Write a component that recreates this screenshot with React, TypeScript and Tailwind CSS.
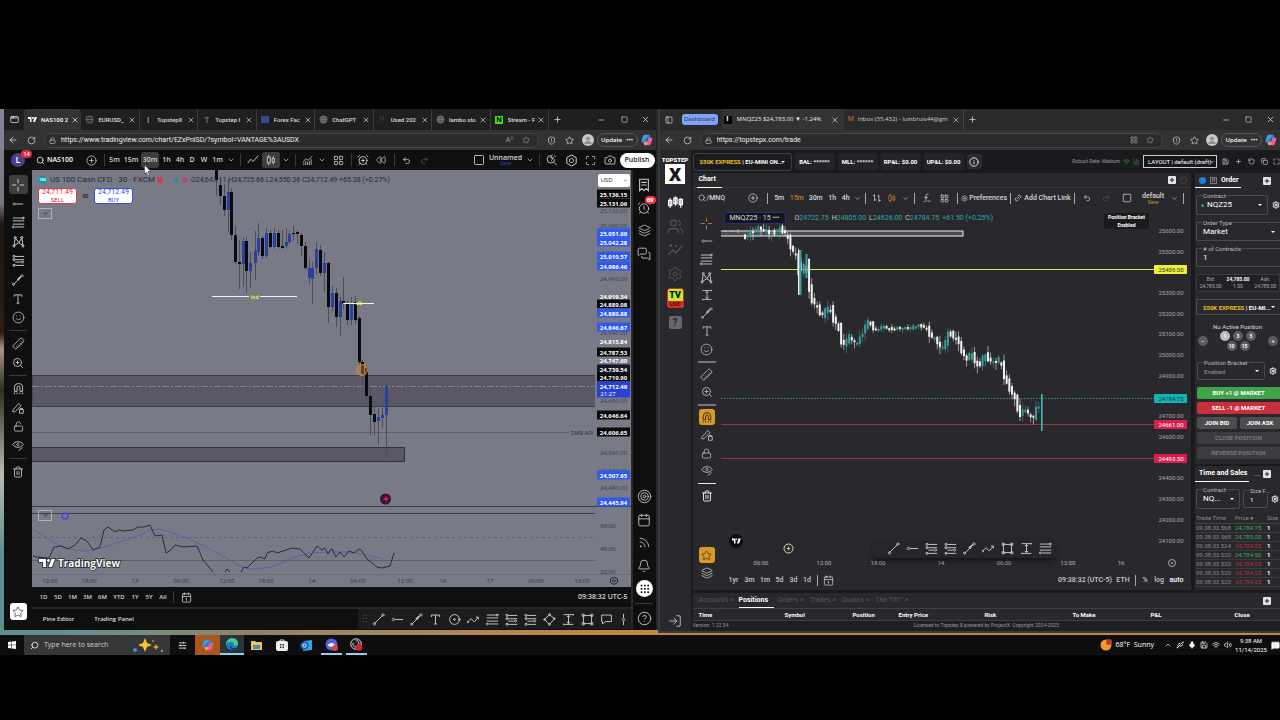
import React from "react";
import {
  ArrowLeft, RotateCw, Lock, LockOpen, Star, Plus, X, Minus, Square, Search, CirclePlus, ChevronDown, LayoutGrid,
  AlarmClockPlus, AlarmClock, Rewind, Undo2, Redo2, Maximize, Camera, Smile, Ruler, ZoomIn, Trash2,
  Layers, MessagesSquare, Target, Calendar, Rss, Bell, CircleHelp, Settings, Link2, Save, Copy, RotateCcw,
  Wifi, LogIn, Users, Mic, Volume2, ChevronUp, Info, BarChart3, Calendar1,
  PanelLeft, AppWindow, SlidersHorizontal, ChartNoAxesCombined, Usb, ShieldAlert, MessageSquareText,
} from "lucide-react";

type Kids = { children?: React.ReactNode };

const LEFT_FONT = "font-['Open_Sans','Noto_Sans',sans-serif]";
const NARROW = "font-['Liberation_Sans_Narrow','Roboto',sans-serif]";

function Glyph({ d, size = 12, fill = false }: { d: string; size?: number; fill?: boolean }) {
  return (
    <svg width={size} height={size} viewBox="0 0 16 16" fill={fill ? "currentColor" : "none"} stroke="currentColor" strokeWidth="1.2" aria-hidden="true">
      <path d={d} />
    </svg>
  );
}

const P = {
  cross: "M8 1v5M8 10v5M1 8h5M10 8h5",
  hline: "M5 8h10M3 6.5a1.5 1.5 0 1 0 .01 0",
  fib: "M1 2.5h14M1 6h14M1 10h14M3 13.5h12M1.5 12.5a1 1 0 1 0 .01 0M14 1.5a1 1 0 1 1-.01 0",
  pattern: "M2.500 13L4 3.500l4.500 6L12 3.500 13.500 13 8.500 9.500zM4 2a1.200 1.200 0 1 0 .01 0M12 2a1.200 1.200 0 1 0 .01 0M2.500 12.500a1.200 1.200 0 1 0 .01 0M13.500 12.500a1.200 1.200 0 1 0 .01 0",
  channel: "M4 3h11M4 7h11M4 10h7M4 14h11M2.5 1.8a1.2 1.2 0 1 0 .01 0M2.5 5.8a1.2 1.2 0 1 0 .01 0M13 8.8a1.2 1.2 0 1 0 .01 0M2.5 12.8a1.2 1.2 0 1 0 .01 0",
  trend: "M3 13L14 2M3 12a1.4 1.4 0 1 0 .01 0M13.5 1a1.4 1.4 0 1 0 .01 0",
  arrow: "M2 14l10-10M7 7l5-4-3 5zM8 6.500l3-2.500-2 3zM2 12.6a1.2 1.2 0 1 0 .01 0M13.5 1a1.4 1.4 0 1 0 .01 0",
  text: "M3 5V2.500h10V5M8 2.500v11M6 13.500h4",
  circle: "M8 2a6 6 0 1 0 .01 0M8 7a1 1 0 1 0 .01 0M14 7a1 1 0 1 0 .01 0",
  zig: "M1 11l4-4 4 4 5-6M11 5h3v3M1 10.500a.8 .8 0 1 0 .01 0",
  rotate: "M8 2l6 5-6 7-6-6zM8 1a1 1 0 1 0 .01 0M14 6a1 1 0 1 0 .01 0M2 7a1 1 0 1 0 .01 0M8 13a1 1 0 1 0 .01 0",
  range: "M2 2h12M2 14h12M8 3v10M6 5l2-2 2 2M6 11l2 2 2-2M14 1v2M2 13v2",
  rect: "M3 3h10v10H3zM1.500 1.500h2.500v2.500H1.500zM12 1.500h2.500v2.500H12zM1.500 12h2.500v2.500H1.500zM12 12h2.500v2.500H12z",
  flag: "M2 2.500h12v8H7l-4 3v-3H2z",
  candle: "M5 1v3M5 12v3M3 4h4v8H3zM11 3v3M11 11v2.500M9.500 6h3v5h-3z",
  line: "M1 12l4-5 3 3 7-8",
  bars: "M4 2v11M4 4H1.500M4 11h3M11 3v11M11 5H8.500M11 12h3",
  fx: "M12 2C9 1 8 2 8 5v6c0 2-1 3-4 3M5 7h6M10 13h5",
  lockpen: "M1 11l8-9 3 3-8 8H1zM10 10h5v5h-5zM11 10V8.500h3V10",
  eyepen: "M1 6c3-5 11-5 14 0-3 5-11 5-14 0M8 4.500a1.500 1.500 0 1 0 .01 0M9 14l5-4",
  candles: "M3 4v9M1.500 6h3v5h-3zM8 2v9M6.500 4h3v5h-3zM13 4v9M11.500 5h3v5h-3z",
  sparkline: "M1 13l5-5 3 3 6-7M4 2v3M2.500 3.500h3M9 3v2M8 4h2",
  magnet: "M3 11.500V7a5 5 0 0 1 10 0v4.500h-3.200V7a1.800 1.800 0 0 0-3.600 0v4.500zM3 13v2M6.200 13v2M9.800 13v2M13 13v2",
  hex: "M8 1.200h0l5.800 3.300v7L8 14.800l-5.800-3.300v-7zM8 5.500a2.500 2.500 0 1 0 .01 0",
  list: "M3 1.500h10v13L10.500 12 8 14.500 5.500 12 3 14.500zM5 5h6M5 8h6",
  quick: "M6.500 2a5 5 0 1 0 5 5M10.500 11l4 4M8.500 1l-2.500 4h4l-3 4M12 2v2",
};

function Btn({ label, className, children, on = false }: Kids & { label: string; className: string; on?: boolean }) {
  return (
    <button type="button" aria-label={label} className={`flex shrink-0 items-center justify-center rounded-[3px] ${on ? "bg-[#3d3d3d]" : ""} ${className}`}>
      {children}
    </button>
  );
}

function Bar({ className = "h-[12px] bg-[#3a3a3a]" }: { className?: string }) {
  return (
    <span className="flex w-[7px] shrink-0 items-center justify-center">
      <span className={`w-px ${className}`} />
    </span>
  );
}

function TvMark({ size = 9 }: { size?: number }) {
  return (
    <svg width={size} height={size} viewBox="0 0 18 12" fill="currentColor" aria-hidden="true">
      <path d="M0 1h7v10H4V5H0zM10 1a2 2 0 1 1-.01 4 2 2 0 0 1 0-4M13.500 1H18l-4 10h-4z" />
    </svg>
  );
}

function Copilot({ size = 10 }: { size?: number }) {
  return (
    <svg width={size} height={size} viewBox="0 0 16 16" aria-hidden="true">
      <path d="M5 1h5c2 0 2 2 2.500 4L8 6 6 11H2C0 11 1 8 2 5 2.800 2 3.500 1 5 1z" fill="#35a4e8" />
      <path d="M10 1c2 0 2 2 2.500 4h-4L7 10c-.6 2-1 3-2.500 3C3 13 3 11 2.500 10" fill="#3f72d8" />
      <path d="M11 15H6c-2 0-2-2-2.500-4L8 10l2-5h4c2 0 1 3 0 6-.8 3-1.500 4-3 4z" fill="#e85d9a" />
      <path d="M6 15c-2 0-2-2-2.500-4h4L9 12z" fill="#f2b13c" />
    </svg>
  );
}

/* ---------- browser chrome ---------- */

function TabIcon({ kind }: { kind: string }) {
  if (kind === "tv") return <TvMark size={9} />;
  if (kind === "n") return <span className="flex size-[8px] items-center justify-center bg-[#3be31c] text-[7px] leading-none font-bold text-black">N</span>;
  if (kind === "blue") return <span className="h-[7px] w-[8px] bg-[#2d4f8c]" />;
  if (kind === "I") return <span className="text-[8px] font-bold text-[#888]">I</span>;
  if (kind === "T") return <span className="text-[8px] font-bold text-[#666]">T</span>;
  if (kind === "H") return <span className="text-[7px] text-[#444]">H</span>;
  return (
    <svg width="9" height="9" viewBox="0 0 16 16" fill={kind === "dot" ? "#555" : "none"} stroke="#777" strokeWidth="1.300" aria-hidden="true">
      <circle cx="8" cy="8" r="6.500" />
      <path d="M2 8h12M8 1.500c-4 4-4 9 0 13M8 1.500c4 4 4 9 0 13" />
    </svg>
  );
}

const TABS: [string, string][] = [
  ["tv", "NAS100 2"], ["globe", "EURUSD_"], ["I", "TopstepX"], ["T", "Topstep I"], ["blue", "Forex Fac"],
  ["dot", "ChatGPT"], ["H", "Used 202"], ["dot", "lambo sto"], ["n", "Stream - F"],
];

function WindowButtons() {
  return (
    <div className="ml-auto flex h-full shrink-0 text-[#ddd]">
      <Btn label="Minimize" className="w-[23px]"><Minus size={8} /></Btn>
      <Btn label="Restore" className="w-[23px]"><Square size={7} /></Btn>
      <Btn label="Close" className="w-[20px]"><X size={9} /></Btn>
    </div>
  );
}

function AddressRow({ url, id, first }: { url: string; id: string; first: React.ReactNode }) {
  return (
    <div className="flex h-[20px] items-center bg-[#323232] text-[#cfcfcf]">
      <Btn label="Back" className="h-4 w-[18px]"><ArrowLeft size={10} /></Btn>
      <Btn label="Reload" className="h-4 w-[19px]"><RotateCw size={9} /></Btn>
      <div className="ml-[3px] flex h-[15px] min-w-0 flex-1 items-center rounded-full border border-[#454545] bg-[#2b2b2b] px-1">
        <Lock size={7} className="shrink-0" />
        <label htmlFor={id} className="sr-only">Address</label>
        <input id={id} defaultValue={url} className="ml-[5px] min-w-0 flex-1 bg-transparent font-['Roboto','Liberation_Sans',sans-serif] text-[7px] leading-[10px] text-[#f0f0f0] outline-none" />
        <Btn label="Page tool" className="w-4 text-[#999]">{first}</Btn>
        <Btn label="Favorite" className="w-4 text-[#999]"><Star size={8} /></Btn>
      </div>
      <Btn label="Extensions" className="ml-1 h-4 w-[18px]"><ShieldAlert size={9} /></Btn>
      <Btn label="Collections" className="h-4 w-[18px]"><Star size={9} /></Btn>
      <Btn label="Profile" className="h-4 w-[18px]">
        <svg width="12" height="12" viewBox="0 0 12 12" aria-hidden="true"><circle cx="6" cy="6" r="6" fill="#c9c9c9" /><circle cx="6" cy="4.500" r="2" fill="#8d8d8d" /><path d="M2.200 10c.6-4 7-4 7.600 0" fill="#8d8d8d" /></svg>
      </Btn>
      <button type="button" className="flex h-[14px] w-[41px] shrink-0 items-center justify-center gap-1 rounded-full border border-[#555] text-[6px] font-semibold text-white">
        Update <span aria-hidden="true">•••</span>
      </button>
      <Btn label="Copilot" className="h-4 w-[18px]"><Copilot size={12} /></Btn>
    </div>
  );
}

/* ---------- left chart ---------- */

type Candle = [number, number, number, number, number, 0 | 1];
// x, wick top, body top, body bottom, wick bottom, rising
const CANDLES: Candle[] = [
  [217, 170, 170, 180, 196, 0], [221, 178, 185, 196, 205, 0], [225, 184, 196, 210, 216, 0], [229, 180, 192, 210, 232, 1],
  [232, 188, 192, 235, 240, 0], [236, 226, 235, 262, 264, 0], [240, 240, 262, 264, 289, 0], [244, 238, 241, 264, 287, 1],
  [247, 237, 241, 271, 293, 0], [251, 252, 263, 271, 288, 1], [256, 231, 251, 263, 280, 1], [259, 223, 238, 252, 256, 1],
  [263, 236, 238, 256, 259, 0], [267, 228, 233, 256, 258, 1], [271, 230, 233, 247, 248, 0], [275, 228, 233, 247, 249, 1],
  [279, 230, 233, 247, 248, 0], [283, 230, 246, 248, 249, 0], [287, 228, 242, 246, 248, 1], [290, 231, 234, 242, 244, 1],
  [294, 226, 233, 234, 241, 0], [298, 230, 232, 234, 244, 0], [302, 233, 235, 246, 256, 0], [306, 242, 246, 268, 270, 0],
  [310, 259, 268, 278, 284, 1], [313, 262, 268, 279, 304, 1], [317, 242, 249, 268, 275, 1], [321, 245, 250, 273, 276, 0],
  [325, 252, 263, 273, 292, 1], [329, 262, 263, 307, 323, 0], [333, 286, 293, 307, 311, 1], [337, 288, 293, 317, 327, 0],
  [341, 297, 301, 317, 336, 1], [344, 277, 301, 304, 310, 0], [348, 300, 304, 320, 325, 0], [352, 297, 304, 320, 325, 1],
  [356, 296, 302, 320, 324, 0], [360, 316, 318, 362, 366, 0], [363, 360, 362, 374, 388, 0], [367, 365, 368, 396, 402, 0],
  [371, 388, 396, 415, 436, 0], [375, 402, 414, 422, 436, 0], [379, 408, 417, 421, 445, 1], [383, 397, 415, 418, 428, 1],
  [387, 380, 386, 415, 457, 1],
];

const RSI_A = "M34 556l4 1 12 1 5-11 7-1 7 3 7-4 6-7 6 3 6 9 7-3 4-17 4-3 7 5 4-2 4 1 10-1 5-3 6 0 6-2 5 11 7-1 4 18 5-3 4-5 8 2 14-1 6 14 10 12M226 572l2-3 3 3M242 572l3-5 3 1 10-10 4-1 4 2 2-6 6-2 4 2 15-5 8 1 9 9 8-12 5 4 3-2 3 6 3-5 1 0 4 8 4-5 4 5 5-6 5 2 5-4 3 2 5 8 10 8 5 1 8-2 4-13";
const RSI_B = "M34 529C50 540 65 550 83 551C100 551 115 543 133 538C146 534 152 529 158 529C180 532 210 548 243 567C255 572 275 568 293 558C310 552 325 552 340 552C362 552 370 556 384 559";

const AXIS_TIMES: [number, string][] = [
  [51, "12:00"], [90, "18:00"], [136, "13"], [182, "06:00"], [228, "12:00"], [267, "18:00"], [313, "14"],
  [359, "06:00"], [406, "12:00"], [444, "16"], [491, "17"], [537, "06:00"], [583, "12:00"],
];

function LeftPlot() {
  return (
    <svg className="block h-[417px] min-w-0 flex-1 bg-[#787a86]" aria-label="US 100 Cash price chart">
      <g transform="translate(-33 -170)">
        <rect x="33" y="375.500" width="3000" height="31" fill="#5a5865" stroke="#3c3b46" strokeWidth="1" />
        <rect x="30" y="447.500" width="375.500" height="14" fill="#5a5865" stroke="#32313a" strokeWidth="1" />
        <path d="M33 386.500H3000" stroke="#8b7f8f" strokeDasharray="7 2 2 2" />
        <path d="M33 432.500H570" stroke="#5f616c" />
        <path d="M33 506.500H3000M33 513.500H3000" stroke="#3a3c46" />
        <path d="M33 537.500H3000" stroke="#61636f" strokeDasharray="3 3" />
        <path d="M33 560.500H3000" stroke="#5b6060" />
        <path d="M33 574.500H3000" stroke="#696b78" />
        <g>
          {CANDLES.map(([x, a, b, c, d, up]) => (
            <g key={x}>
              <rect x={x} y={a} width="1" height={d - a} fill="#4b4d5b" />
              <rect x={x - 1} y={b} width="3" height={c - b} fill={up ? "#2c3f9e" : "#090912"} />
            </g>
          ))}
        </g>
        <path d="M213 296.500H298M344 303.500H375" stroke="#f3f3f3" strokeWidth="1.200" />
        <rect x="250" y="293" width="11" height="7" fill="#787a86" />
        <text x="255.500" y="298.500" textAnchor="middle" fontSize="5" fontWeight="700" fill="#f2e33c">Ind</text>
        <text x="360" y="305" textAnchor="middle" fontSize="5" fontWeight="700" fill="#f2e33c">ob</text>
        <circle cx="363" cy="370" r="5.500" fill="#c98a3c" fillOpacity="0.450" stroke="#d18a2e" />
        <circle cx="386.500" cy="499" r="5.500" fill="#3b0f3f" />
        <path d="M388 495l-4 5h3l-1 3 4-5h-3z" fill="#e0264f" />
        <path d={RSI_B} fill="none" stroke="#5d60a8" />
        <path d={RSI_A} fill="none" stroke="#2a2c36" />
        <text x="572" y="435" fontSize="5" fill="#23252f">DMSI AOI</text>
        <g fontSize="6" fill="#30323d" textAnchor="middle">
          {AXIS_TIMES.map(([x, t]) => (
            <text key={x} x={x} y="582.500">{t}</text>
          ))}
        </g>
        <g transform="translate(40 556)" fill="#ffffff" stroke="#23252f" strokeWidth="1.500" paintOrder="stroke">
          <path d="M0 3h7v8H4V6H0zM9.500 3a1.500 1.500 0 1 1-.01 3 1.500 1.500 0 0 1 0-3M12.500 3H16l-3 8H9.500z" />
          <text x="19" y="10.500" fontSize="10" fontWeight="700">TradingView</text>
        </g>
        <path d="M66 513a3 3 0 1 1-3 3l1-2" fill="none" stroke="#5a3fe0" strokeWidth="1.600" />
      </g>
    </svg>
  );
}

// y, value, style: k black, b blue, w white text, g grey text, n navy
const LEFT_PRICES: [number, string, string][] = [
  [210, "25,120.00", "g"], [225, "25,080.00", "g"], [261, "25,000.00", "g"], [278, "24,960.00", "g"], [332, "24,840.00", "g"],
  [400, "24,680.00", "g"], [452, "24,560.00", "g"], [470, "24,520.00", "g"], [487, "24,480.00", "g"],
  [194, "25,136.15", "k"], [203, "25,131.06", "k"], [233, "25,051.00", "b"], [242, "25,042.28", "b"], [256, "25,010.57", "b"],
  [266, "24,986.46", "b"], [296, "24,919.34", "w"], [304, "24,889.08", "k"], [313, "24,880.88", "b"], [327, "24,846.67", "b"],
  [341, "24,815.84", "w"], [352, "24,787.53", "k"], [360, "24,747.69", "w"], [369, "24,739.54", "n"], [377, "24,719.90", "k"],
  [415, "24,646.64", "k"], [432, "24,606.65", "k"], [475, "24,507.95", "b"], [502, "24,445.94", "b"],
];
const TAG: Record<string, string> = { k: "#0a0a0a", b: "#2f59f0", w: "none", g: "none", n: "#14162c" };

function LeftAxis() {
  return (
    <svg className="block h-[417px] w-[36px] shrink-0 bg-[#787a86]" aria-label="Price axis">
      <g transform="translate(-595 -170)" fontSize="6" textAnchor="middle">
        <path d="M595 506.500h40" stroke="#3a3c46" />
        <path d="M595 574.500h40" stroke="#696b78" />
        {LEFT_PRICES.map(([y, t, k]) => (
          <g key={t}>
            <rect x="597" y={y - 4.500} width="33" height="9" fill={TAG[k]} />
            <text x="613.500" y={y + 2.500} fill={k === "g" ? "#3a3c47" : "#ffffff"} fontWeight={k === "g" ? 400 : 700}>{t}</text>
          </g>
        ))}
        <rect x="597" y="381.500" width="33" height="16" fill="#2743d0" />
        <text x="613.500" y="388.500" fill="#fff" fontWeight="700">24,712.49</text>
        <text x="608" y="395.500" fill="#fff">21:27</text>
        <text x="608" y="527.500" fill="#30323d">60.00</text>
        <text x="608" y="550.500" fill="#30323d">40.00</text>
        <text x="608" y="573.500" fill="#30323d">20.00</text>
        <path d="M614 577l3.500 2v3.500l-3.500 2-3.500-2V579zM614 579.500a1.300 1.300 0 1 0 .01 0" fill="none" stroke="#23252f" />
      </g>
    </svg>
  );
}

const DRAW_TOOLS: [string, string][] = [
  ["Trend line", P.trend], ["Horizontal ray", P.hline], ["Arrow", P.arrow], ["Text", P.text], ["Circle", P.circle], ["Path", P.zig],
  ["Fib retracement", P.fib], ["Long position", P.channel], ["Short position", P.channel], ["Rotated rectangle", P.rotate],
  ["Price range", P.range], ["Rectangle", P.rect], ["Callout", P.flag],
];

function RailRule({ className }: { className: string }) {
  return <div className="flex h-[7px] shrink-0 items-center justify-center"><span className={`w-[18px] ${className}`} /></div>;
}

function LeftRail() {
  const c = "h-[19px] w-[19px]";
  return (
    <nav aria-label="Drawing tools" className="flex w-[28px] shrink-0 flex-col items-center bg-[#0f0f0f] pt-[5px] text-[#c8c8c8]">
      <Btn label="Crosshair" className={c} on><Glyph d={P.cross} size={14} /></Btn>
      <Btn label="Horizontal line" className={c}><Glyph d={P.hline} /></Btn>
      <Btn label="Fibonacci" className={c}><Glyph d={P.fib} size={13} /></Btn>
      <Btn label="Pattern" className={c}><Glyph d={P.pattern} size={13} /></Btn>
      <Btn label="Projection" className={c}><Glyph d={P.channel} size={13} /></Btn>
      <Btn label="Brush" className={c}><Glyph d={P.arrow} /></Btn>
      <Btn label="Text" className={c}><Glyph d={P.text} /></Btn>
      <Btn label="Icons" className={c}><Smile size={13} strokeWidth={1.500} /></Btn>
      <RailRule className="h-px bg-[#3a3a3a]" />
      <Btn label="Measure" className={c}><Ruler size={13} strokeWidth={1.500} className="rotate-90" /></Btn>
      <Btn label="Zoom in" className={c}><ZoomIn size={12} strokeWidth={1.700} /></Btn>
      <RailRule className="h-px bg-[#3a3a3a]" />
      <Btn label="Magnet" className={c}><Glyph d={P.magnet} size={13} /></Btn>
      <Btn label="Stay in drawing mode" className={c}><Glyph d={P.lockpen} /></Btn>
      <Btn label="Lock drawings" className={c}><LockOpen size={11} strokeWidth={1.700} /></Btn>
      <Btn label="Hide drawings" className={c}><Glyph d={P.eyepen} /></Btn>
      <RailRule className="h-px bg-[#3a3a3a]" />
      <Btn label="Remove" className={c}><Trash2 size={12} strokeWidth={1.700} /></Btn>
      <Btn label="Favorites toolbar" className="mt-auto mb-[10px] h-[17px] w-[17px] bg-white text-[#333]"><Star size={12} strokeWidth={1.500} /></Btn>
    </nav>
  );
}

function LeftSidebar() {
  const c = "h-[23px] w-[23px] relative";
  return (
    <nav aria-label="Widgets" className="flex w-[25px] shrink-0 flex-col items-center border-l-2 border-[#2a2a2a] bg-[#0f0f0f] pt-[3px] text-[#c8c8c8]">
      <Btn label="Watchlist" className={c}><Glyph d={P.list} size={14} /></Btn>
      <Btn label="Alerts" className={c}>
        <AlarmClock size={14} strokeWidth={1.500} />
        <span className="absolute top-0 right-0 rounded-full bg-[#f23645] px-[2px] text-[6px] leading-[8px] font-bold text-white">69</span>
      </Btn>
      <Btn label="Object tree" className={c}><Layers size={13} strokeWidth={1.500} /></Btn>
      <Btn label="Chats" className={c}><MessagesSquare size={14} strokeWidth={1.500} /></Btn>
      <div className="mt-auto">
        <Btn label="Screeners" className={c}><Target size={15} strokeWidth={1.500} /></Btn>
        <Btn label="Calendars" className={c}><Calendar size={14} strokeWidth={1.500} /></Btn>
        <Btn label="News" className={c}><Rss size={13} strokeWidth={1.500} /></Btn>
        <Btn label="Notifications" className={c}><Bell size={14} strokeWidth={1.500} /></Btn>
        <Btn label="Products" className={c}>
          <svg width="17" height="17" viewBox="0 0 18 18" aria-hidden="true">
            <circle cx="9" cy="9" r="9" fill="#fff" />
            {[5, 8.500, 12].map((y) => [5, 8.500, 12].map((x) => <rect key={`${x}-${y}`} x={x} y={y} width="1.800" height="1.800" fill="#111" />))}
          </svg>
        </Btn>
        <RailRule className="h-px bg-[#3a3a3a]" />
        <Btn label="Help" className={c}><CircleHelp size={15} strokeWidth={1.500} /></Btn>
      </div>
    </nav>
  );
}

function LeftWindow() {
  return (
    <section aria-label="TradingView window" className={`flex min-w-0 grow basis-[653px] flex-col border-r-2 border-[#262626] bg-[#0f0f0f] ${LEFT_FONT}`}>
      <div className="flex h-[21px] items-center bg-[#1f1f1f]">
        <Btn label="Tab actions" className="h-4 w-[20px] text-[#ddd]"><AppWindow size={9} /></Btn>
        <div role="tablist" className="flex h-full min-w-0 basis-[525px]">
          {TABS.map(([icon, title], i) => (
            <div key={title} role="tab" aria-selected={i === 0} className={`flex min-w-0 flex-1 items-center pl-1 ${i === 0 ? "rounded-t-[4px] bg-[#333] text-white" : "border-r border-[#3c3c3c] text-[#ddd]"}`}>
              <span className="flex w-[9px] shrink-0 items-center justify-center"><TabIcon kind={icon} /></span>
              <span className="ml-1 min-w-0 flex-1 overflow-hidden font-['Roboto','Liberation_Sans',sans-serif] text-[6px] font-medium whitespace-nowrap">{title}</span>
              <Btn label="Close tab" className="w-[13px]"><X size={8} /></Btn>
            </div>
          ))}
        </div>
        <Btn label="New tab" className="h-4 w-[16px] text-[#ddd]"><Plus size={9} /></Btn>
        <WindowButtons />
      </div>
      <AddressRow id="url-left" url="https://www.tradingview.com/chart/EZxPnlSD/?symbol=VANTAGE%3AUSDX" first={<span className="text-[7px]">A⁾⁾</span>} />
      <div className="flex h-[20px] items-center bg-[#0f0f0f] text-[7px] font-semibold text-[#d4d4d4]">
        <Btn label="Account" className="relative h-[20px] w-[28px]">
          <span className="flex size-[14px] items-center justify-center rounded-full bg-[#4b3f86] text-[9px] text-white">L</span>
          <span className="absolute top-0 right-0 rounded-full bg-[#e0283c] px-[2px] text-[6px] leading-[8px] text-white">14</span>
        </Btn>
        <button type="button" className="flex w-[50px] shrink-0 items-center gap-[2px] pl-1 text-white"><Search size={9} />NAS100</button>
        <Btn label="Compare" className="w-[19px]"><CirclePlus size={11} strokeWidth={1.600} /></Btn>
        <Bar />
        <Btn label="5 minutes" className="w-[13px]">5m</Btn>
        <Btn label="15 minutes" className="w-[20px]">15m</Btn>
        <Btn label="30 minutes" className="h-[16px] w-[18px]" on>30m</Btn>
        <Btn label="1 hour" className="w-[15px]">1h</Btn>
        <Btn label="4 hours" className="w-[12px]">4h</Btn>
        <Btn label="1 day" className="w-[12px]">D</Btn>
        <Btn label="1 week" className="w-[12px]">W</Btn>
        <Btn label="1 minute" className="w-[15px]">1m</Btn>
        <Btn label="More intervals" className="w-[12px]"><ChevronDown size={8} /></Btn>
        <Bar />
        <Btn label="Line" className="w-[18px]"><Glyph d={P.line} /></Btn>
        <Btn label="Candles" className="h-[16px] w-[18px]" on><Glyph d={P.candle} /></Btn>
        <Btn label="Chart types" className="w-[12px]"><ChevronDown size={8} /></Btn>
        <Bar />
        <Btn label="Indicators" className="w-[16px]"><ChartNoAxesCombined size={11} strokeWidth={1.700} /></Btn>
        <Btn label="Favorite indicators" className="w-[14px]"><ChevronDown size={8} /></Btn>
        <Btn label="Templates" className="w-[19px]"><LayoutGrid size={11} strokeWidth={1.700} /></Btn>
        <Bar />
        <Btn label="Alert" className="w-[16px]"><AlarmClockPlus size={12} strokeWidth={1.700} /></Btn>
        <Btn label="Replay" className="w-[20px]"><Rewind size={10} strokeWidth={1.700} /></Btn>
        <Bar />
        <Btn label="Undo" className="w-[16px]"><Undo2 size={9} /></Btn>
        <Btn label="Redo" className="w-[20px] text-[#555]"><Redo2 size={9} /></Btn>
        <div className="ml-auto flex items-center">
          <Btn label="Layout" className="w-[18px]"><Square size={12} strokeWidth={1.700} /></Btn>
          <button type="button" className="flex w-[36px] flex-col items-center text-[7px] leading-[7px]">
            Unnamed<span className="text-[5px] leading-[5px] text-[#3434c8]">Save</span>
          </button>
          <Btn label="Layouts" className="w-[12px]"><ChevronDown size={8} /></Btn>
          <Bar />
          <Btn label="Quick search" className="w-[19px]"><Glyph d={P.quick} size={12} /></Btn>
          <Btn label="Settings" className="w-[19px]"><Glyph d={P.hex} size={13} /></Btn>
          <Btn label="Fullscreen" className="w-[19px]"><Maximize size={11} strokeWidth={1.700} /></Btn>
          <Btn label="Snapshot" className="w-[20px]"><Camera size={12} strokeWidth={1.700} /></Btn>
          <button type="button" className="mr-px h-[15px] w-[35px] rounded-full bg-white text-[7px] text-[#222]">Publish</button>
        </div>
      </div>
      <div className="flex flex-1">
        <LeftRail />
        <div className="flex min-w-0 flex-1 flex-col">
          <div className="relative flex">
            <LeftPlot />
            <LeftAxis />
            <div className="absolute top-[5px] left-[6px] flex items-center gap-[3px] font-['Roboto','Liberation_Sans',sans-serif] text-[7px] leading-[10px] whitespace-nowrap text-[#262833]">
              <span className="rounded-full bg-[#1699a8] px-[1px] text-[4px] leading-[8px] font-bold text-white">100</span>
              <span className="w-[104px] text-[8px]">US 100 Cash CFD · 30 · FXCM</span>
              <span className="size-[6px] rounded-full bg-[#d8394f]" />
              <span className="ml-2 size-[5px] rounded-full bg-[#3b8b7e]" />
              <span className="size-[6px] rounded-full bg-[#b04a80]" />
              <span>O24,647.11 H24,725.86 L24,550.36 C24,712.49 +65.38 (+0.27%)</span>
            </div>
            <div className="absolute top-[18px] left-[6px] flex items-center font-['Roboto','Liberation_Sans',sans-serif] text-[7px] leading-[7px]">
              <button type="button" className="h-[16px] w-[39px] rounded-[3px] border border-[#e03a4c] bg-white text-[#d0283c]">24,711.49<br /><span className="text-[6px]">SELL</span></button>
              <span className="w-[17px] text-center text-[5px]">00</span>
              <button type="button" className="h-[16px] w-[39px] rounded-[3px] border border-[#3350dd] bg-white text-[#2a46d6]">24,712.49<br /><span className="text-[6px]">BUY</span></button>
            </div>
            <button type="button" aria-label="Collapse legend" className="absolute top-[38px] left-[6px] flex h-[11px] w-[14px] items-center justify-center border border-[#b0b2bb]"><ChevronDown size={7} /></button>
            <button type="button" aria-label="Collapse indicator" className="absolute top-[340px] left-[6px] flex h-[11px] w-[14px] items-center justify-center border border-[#b0b2bb]"><ChevronDown size={7} /></button>
            <div className="absolute top-[4px] right-px flex items-center">
              <label htmlFor="currency" className="sr-only">Currency</label>
              <select id="currency" className="h-[13px] w-[32px] appearance-none rounded-[2px] bg-white pl-[3px] text-[6px] text-[#222]"><option>USD</option></select>
              <ChevronDown size={5} className="pointer-events-none absolute right-[2px]" />
            </div>
          </div>
          <div className="flex h-[20px] items-center pl-1 text-[6px] font-semibold text-[#d4d4d4]">
            <Btn label="1 day range" className="w-[15px]">1D</Btn>
            <Btn label="5 days range" className="w-[14px]">5D</Btn>
            <Btn label="1 month range" className="w-[15px]">1M</Btn>
            <Btn label="3 months range" className="w-[15px]">3M</Btn>
            <Btn label="6 months range" className="w-[15px]">6M</Btn>
            <Btn label="Year to date" className="w-[18px]">YTD</Btn>
            <Btn label="1 year range" className="w-[14px]">1Y</Btn>
            <Btn label="5 years range" className="w-[14px]">5Y</Btn>
            <Btn label="All data" className="w-[14px]">All</Btn>
            <Bar />
            <Btn label="Go to date" className="w-[18px]"><Calendar1 size={11} strokeWidth={1.700} /></Btn>
            <button type="button" className="ml-auto pr-[3px] text-[7px]">09:38:32 UTC-5</button>
          </div>
          <div className="flex h-[22px] items-center border-t-2 border-[#262626] text-[6px] font-semibold text-[#dcdcdc]">
            <button type="button" className="w-[53px] text-center">Pine Editor</button>
            <button type="button" className="w-[58px] text-center">Trading Panel</button>
            <div className="ml-auto flex h-full items-center bg-[#1c1c1c] text-[#c4c4c4]">
              <svg width="11" height="10" viewBox="0 0 11 10" fill="#555" aria-hidden="true"><path d="M5 1h1v1H5zM5 4h1v1H5zM5 7h1v1H5zM8 1h1v1H8zM8 4h1v1H8zM8 7h1v1H8z" /></svg>
              {DRAW_TOOLS.map(([n, d]) => (
                <Btn key={n} label={n} className="h-[18px] w-[19px]"><Glyph d={d} size={13} /></Btn>
              ))}
              <Btn label="More" className="h-[18px] w-[15px]"><Glyph d="M8 1v5M8 10v5M8 6.500a1.500 1.500 0 1 0 .01 0" size={13} /></Btn>
            </div>
          </div>
        </div>
        <LeftSidebar />
      </div>
    </section>
  );
}

/* ---------- right window ---------- */

const CURVE: [number, number][] = [
  [744, 237], [750, 234], [756, 229], [762, 228], [767, 232], [773, 234], [779, 228], [786, 233], [790, 245], [795, 254], [798, 260],
  [800, 280], [803, 268], [806, 256], [809, 290], [812, 300], [816, 305], [820, 313], [824, 316], [829, 305], [833, 318], [838, 325],
  [841, 341], [846, 346], [850, 332], [854, 345], [860, 340], [866, 324], [870, 321], [875, 332], [882, 326], [890, 329], [900, 328],
  [910, 328], [920, 325], [926, 328], [932, 337], [938, 342], [943, 352], [947, 336], [950, 331], [955, 339], [960, 342], [963, 357],
  [967, 360], [971, 352], [976, 363], [979, 369], [984, 354], [990, 360], [994, 364], [1000, 357], [1003, 372], [1007, 384],
  [1012, 391], [1016, 402], [1021, 417], [1026, 407], [1032, 421], [1037, 408], [1040, 403],
];

function level(x: number) {
  for (let i = 1; i < CURVE.length; i++) {
    if (x <= CURVE[i][0]) {
      const [x0, y0] = CURVE[i - 1];
      const [x1, y1] = CURVE[i];
      return y0 + ((y1 - y0) * (x - x0)) / (x1 - x0);
    }
  }
  return CURVE[CURVE.length - 1][1];
}

function RightCandles() {
  const out: React.ReactNode[] = [];
  for (let i = 0; i < 111; i++) {
    const x = 744 + i * 2.67;
    const calm = x > 868 && x < 928 ? 0.45 : 1;
    const wob = (((i * 37) % 11) - 5) * calm;
    const open = level(x - 2) + wob * 0.7;
    const close = level(x + 2) - wob * 0.6;
    const up = close < open;
    const top = Math.min(open, close);
    const h = Math.max(2, Math.abs(open - close));
    const above = (1 + ((i * 17) % 6)) * calm;
    const below = (1 + ((i * 23) % 7)) * calm;
    out.push(
      <g key={i} fill={up ? "#3a9c9b" : "#f2f2f2"}>
        <rect x={x + 0.6} y={top - above} width="0.8" height={h + above + below} fillOpacity="0.7" />
        <rect x={x} y={top} width="2" height={h} />
      </g>,
    );
  }
  return <g>{out}</g>;
}

const RIGHT_TIMES: [number, string][] = [[761, "06:00"], [824, "12:00"], [878, "18:00"], [941, "14"], [1004, "06:00"], [1068, "12:00"], [1121, "16"]];

function RightPlot() {
  return (
    <svg className="block h-[362px] min-w-0 flex-1" aria-label="MNQZ25 price chart">
      <g transform="translate(-721 -208)">
        <rect x="715" y="231" width="248" height="5" fill="#4c4c50" stroke="#f0f0f0" />
        <path d="M721 269.500H3000" stroke="#e8e04a" strokeWidth="1.200" />
        <path d="M721 398.500H3000" stroke="#45898b" strokeDasharray="1.500 1.500" />
        <path d="M721 424.500H3000M721 458.500H3000" stroke="#9c2f4d" strokeWidth="1.200" />
        <RightCandles />
        <path d="M799 250h2.500v45H799zM805.500 254h2v24h-2z" fill="#3a9c9b" />
        <path d="M798 250h1.200v45H798z" fill="#f2f2f2" />
        <rect x="1041" y="394" width="1.600" height="37" fill="#45b5b5" />
        <circle cx="736" cy="541" r="7" fill="#0c0c0e" />
        <path d="M732 538.500h3.500v5h-1.500v-3h-2zM736.500 538.500a.8 .8 0 1 1-.01 1.600.8.8 0 0 1 0-1.600M738.500 538.500h2.500l-2 5h-2z" fill="#fff" />
        <circle cx="788.500" cy="548.500" r="4.500" fill="none" stroke="#d8d8d8" />
        <path d="M789.500 545.500l-3 3.500h2l-1 2.500 3-3.500h-2z" fill="#e6d75a" />
        <path d="M724 231h3M730 230l2 2 2-2M738 229v4" fill="none" stroke="#b0b0b4" />
        <g fontSize="6" fill="#b4b4b8" textAnchor="middle">
          {RIGHT_TIMES.map(([x, t]) => <text key={x} x={x} y="564.500">{t}</text>)}
        </g>
      </g>
    </svg>
  );
}

const RIGHT_PRICES: [number, string, string, string][] = [
  [230, "25600.00", "none", "#a8a8ac"], [251, "25500.00", "none", "#a8a8ac"], [269.5, "25409.00", "#eeee3c", "#33331a"],
  [292, "25300.00", "none", "#a8a8ac"], [313, "25200.00", "none", "#a8a8ac"], [333, "25100.00", "none", "#a8a8ac"],
  [354, "25000.00", "none", "#a8a8ac"], [375, "24900.00", "none", "#a8a8ac"], [395, "24800.00", "none", "#a8a8ac"],
  [398.5, "24784.75", "#12b3b5", "#0a4244"], [415.5, "24700.00", "none", "#a8a8ac"], [424.5, "24661.00", "#d81f4f", "#ffffff"],
  [436, "24600.00", "none", "#a8a8ac"], [458.5, "24493.50", "#d81f4f", "#ffffff"], [477.5, "24400.00", "none", "#a8a8ac"],
  [498, "24300.00", "none", "#a8a8ac"], [519, "24200.00", "none", "#a8a8ac"], [540, "24100.00", "none", "#a8a8ac"],
];

function RightAxis() {
  return (
    <svg className="block h-[362px] w-[37px] shrink-0" aria-label="Price axis">
      <g transform="translate(-1154 -208)" fontSize="6" textAnchor="middle">
        {RIGHT_PRICES.map(([y, t, bg, fg]) => (
          <g key={t}>
            <rect x="1154" y={y - 4.500} width="33" height="9" rx="1" fill={bg} />
            <text x="1171" y={y + 2.500} fill={fg}>{t}</text>
          </g>
        ))}
        <circle cx="1172" cy="563" r="3.500" fill="none" stroke="#aaa" />
        <circle cx="1172" cy="563" r="1" fill="#aaa" />
      </g>
    </svg>
  );
}

function PlusBox() {
  return (
    <button type="button" aria-label="Add tab" className="ml-auto flex size-[8px] shrink-0 items-center justify-center rounded-[1px] bg-[#e4e4e4] text-[#222]">
      <Plus size={6} strokeWidth={4} />
    </button>
  );
}

function Stat({ t }: { t: string }) {
  return <span className="flex h-[17px] w-[40px] items-center justify-center rounded-[3px] bg-[#232328] text-[6px] font-bold text-white">{t}</span>;
}

function Field({ id, label, value, className, open = false, text = "text-[8px] text-white", input = false }: { id: string; label: string; value: string; className: string; open?: boolean; text?: string; input?: boolean }) {
  return (
    <div className={`relative flex items-center rounded-[2px] border border-[#4a4a50] ${open ? "rounded-r-none border-r-0" : ""} ${className}`}>
      <label htmlFor={id} className="absolute -top-[4px] left-[5px] bg-[#29292d] px-[1px] text-[6px] leading-[7px] whitespace-nowrap text-[#bbb]">{label}</label>
      {input ? (
        <input id={id} defaultValue={value} className={`w-full min-w-0 bg-transparent pl-[6px] outline-none ${text}`} />
      ) : (
        <>
          <select id={id} className={`w-full min-w-0 appearance-none bg-transparent pl-[6px] outline-none ${text}`}><option>{value}</option></select>
          <span aria-hidden="true" className="pointer-events-none absolute right-[5px] border-x-2 border-t-2 border-x-transparent border-t-white" />
        </>
      )}
    </div>
  );
}

const TRADES: [string, string, boolean][] = [
  ["09:38:33.568", "24,784.75", true], ["09:38:33.568", "24,785.00", true], ["09:38:33.524", "24,784.25", false],
  ["09:38:33.520", "24,784.50", true], ["09:38:33.520", "24,784.25", false], ["09:38:33.520", "24,784.25", false],
  ["09:38:33.520", "24,784.25", false],
];

function OrderColumn() {
  const round = "flex size-[10px] items-center justify-center rounded-full bg-[#5c5c60] text-[5px] font-bold text-white";
  return (
    <aside className={`ml-1 flex w-[85px] shrink-0 flex-col overflow-hidden ${NARROW}`}>
      <div className="flex flex-col gap-[7px] bg-[#29292d]">
        <div className="flex h-[15px] items-center gap-[4px] pr-[9px]">
          <h2 className="flex h-full w-[46px] items-center gap-[4px] border-b border-white pl-1 text-[7px] font-bold text-white">
            <span className="size-[7px] rounded-full bg-[#1a83dd]" />
            <span className="size-[7px] border border-[#777] text-center text-[5px] leading-[5px] text-[#999]">H</span>Order
          </h2>
          <PlusBox />
        </div>
        <div className="flex items-center gap-1 pl-px">
          <div className="relative flex items-center">
            <Field id="contract" label="Contract" value="NQZ25" className="h-[20px] w-[72px] pl-[4px]" />
            <span className="pointer-events-none absolute left-[5px] size-[3px] rounded-full bg-[#3f9f50]" />
          </div>
          <Btn label="Contract settings" className="text-white"><Settings size={8} strokeWidth={3} /></Btn>
        </div>
        <Field id="otype" label="Order Type" value="Market" className="ml-px h-[19px]" open />
        <Field id="qty" label="# of Contracts" value="1" className="ml-px h-[19px]" open input />
        <div className="ml-px grid h-[18px] grid-cols-3 items-center rounded-[2px] border border-[#3a3a3f] bg-[#222226] text-center text-[5px] leading-[7px] text-[#aaa]">
          <span>Bid:<br />24,785.00</span><span><b className="text-white">24,785.00</b><br />1.00</span><span>Ask:<br />24,785.00</span>
        </div>
        <div className="relative ml-px flex h-[16px] items-center border border-r-0 border-[#4a4a50] pl-[6px] text-[6px] font-bold whitespace-nowrap text-white">
          <span className="text-[#e8c020]">$50K EXPRESS</span>&nbsp;| EU-MI...
          <span aria-hidden="true" className="absolute right-[5px] border-x-2 border-t-2 border-x-transparent border-t-white" />
        </div>
        <div className="flex h-[33px] flex-col items-center text-[6px] leading-[9px] text-[#ddd]">
          No Active Position
          <div className="flex w-full items-center justify-between pr-[2px] pl-[3px]">
            <button type="button" aria-label="Decrease" className={round}>−</button>
            <div className="flex w-[44px] flex-wrap justify-center gap-x-[3px]">
              {["1", "3", "5", "10", "15"].map((n) => (
                <button type="button" key={n} className={n === "1" ? "flex size-[10px] items-center justify-center rounded-full bg-[#bdbdbd] text-[5px] font-bold text-white" : round}>{n}</button>
              ))}
            </div>
            <button type="button" aria-label="Increase" className={round}>+</button>
          </div>
        </div>
        <div className="flex items-center gap-1 pl-[2px]">
          <Field id="bracket" label="Position Bracket" value="Enabled" className="h-[18px] w-[68px]" text="text-[6px] text-[#999]" />
          <Btn label="Bracket settings" className="text-white"><Settings size={8} strokeWidth={3} /></Btn>
        </div>
        <div className="flex flex-col gap-[3px] pb-[5px] pl-[2px] text-[6px] leading-[12px] font-bold text-white">
          <button type="button" className="h-[12px] rounded-l-[2px] bg-[#3fa34a]">BUY +1 @ MARKET</button>
          <button type="button" className="h-[12px] rounded-l-[2px] bg-[#c62f3b]">SELL -1 @ MARKET</button>
          <div className="grid grid-cols-2 gap-[3px]">
            <button type="button" className="h-[12px] rounded-[2px] bg-[#4d4d50]">JOIN BID</button>
            <button type="button" className="h-[12px] rounded-l-[2px] bg-[#4d4d50]">JOIN ASK</button>
          </div>
          <button type="button" className="h-[12px] rounded-l-[2px] bg-[#3c3c3f] text-[#77777b]">CLOSE POSITION</button>
          <button type="button" className="h-[12px] rounded-l-[2px] bg-[#3c3c3f] text-[#77777b]">REVERSE POSITION</button>
        </div>
      </div>
      <div className="mt-[2px] flex flex-1 flex-col bg-[#29292d]">
        <div className="flex h-[16px] items-center pr-[9px] text-[7px] text-white">
          <h2 className="flex h-full w-[54px] items-center border-b border-white pl-1 text-[7px] font-bold whitespace-nowrap">Time and Sales</h2>
          <span className="ml-[5px] text-[#ccc]">...</span><PlusBox />
        </div>
        <div className="flex items-center gap-[3px] pt-[7px] pl-px">
          <Field id="tscontract" label="Contract" value="NQ..." className="h-[20px] w-[44px]" text="text-[8px] text-white" />
          <Field id="tssize" label="Size F..." value="1" className="h-[18px] w-[25px]" text="text-[6px] text-white" input />
          <Btn label="Filter settings" className="text-white"><Settings size={8} strokeWidth={3} /></Btn>
        </div>
        <table className="mt-[5px] w-full table-fixed text-left text-[6px] leading-[8px] text-[#8a8a8e]">
          <thead>
            <tr className="h-[9px] border-b border-[#444]">
              <th className="w-[40px] pl-px font-normal">Trade Time</th><th className="w-[32px] font-normal">Price ●</th><th className="font-normal">Size</th>
            </tr>
          </thead>
          <tbody>
            {TRADES.map(([t, p, up], i) => (
              <tr key={i} className="h-[9px] border-b border-[#3b3b3f]">
                <td className="pl-px">{t}</td><td className={up ? "text-[#3fae55]" : "text-[#b8303e]"}>{p}</td><td className="font-bold text-white">1</td>
              </tr>
            ))}
          </tbody>
        </table>
      </div>
    </aside>
  );
}

function RightDrawRail() {
  const c = "h-[18px] w-[18px]";
  const gold = "h-[16px] w-[16px] my-px bg-[#d99a26] text-[#33240a]";
  return (
    <nav aria-label="Chart drawing tools" className="flex w-[28px] shrink-0 flex-col items-center pt-[6px] text-[#bdbdc1]">
      <Btn label="Crosshair" className={`${c} text-[#b87a2c]`}><Glyph d={P.cross} size={13} /></Btn>
      <Btn label="Horizontal line" className={c}><Glyph d={P.hline} /></Btn>
      <Btn label="Fibonacci" className={c}><Glyph d={P.fib} size={13} /></Btn>
      <Btn label="Pattern" className={c}><Glyph d={P.pattern} size={13} /></Btn>
      <Btn label="Range" className={c}><Glyph d={P.range} /></Btn>
      <Btn label="Brush" className={c}><Glyph d={P.arrow} /></Btn>
      <Btn label="Text" className={c}><Glyph d={P.text} /></Btn>
      <Btn label="Icons" className={c}><Smile size={13} strokeWidth={1.500} /></Btn>
      <RailRule className="h-[2px] bg-[#77777d]" />
      <Btn label="Measure" className={c}><Ruler size={13} strokeWidth={1.500} className="rotate-90" /></Btn>
      <Btn label="Zoom in" className={c}><ZoomIn size={12} strokeWidth={1.700} /></Btn>
      <RailRule className="h-[2px] bg-[#77777d]" />
      <Btn label="Magnet" className={gold}><Glyph d={P.magnet} size={12} /></Btn>
      <Btn label="Stay in drawing mode" className={c}><Glyph d={P.lockpen} /></Btn>
      <Btn label="Lock drawings" className={c}><Lock size={11} strokeWidth={1.700} /></Btn>
      <Btn label="Hide drawings" className={c}><Glyph d={P.eyepen} /></Btn>
      <RailRule className="h-px bg-[#e8e8e8]" />
      <Btn label="Remove" className={`${c} text-white`}><Trash2 size={12} strokeWidth={1.700} /></Btn>
      <div className="mt-auto mb-[8px] flex flex-col items-center">
        <Btn label="Favorites" className={gold}><Star size={11} strokeWidth={1.500} /></Btn>
        <Btn label="Object tree" className={c}><Layers size={12} strokeWidth={1.700} /></Btn>
      </div>
    </nav>
  );
}

const RIGHT_TOOLS: [string, string][] = [
  ["Trend", P.trend], ["Ray", P.hline], ["Long", P.channel], ["Short", P.channel], ["Arrow", P.arrow], ["Path", P.zig],
  ["Rectangle", P.rect], ["Range", P.range], ["Fib", P.fib],
];

const OHLC: [string, string][] = [["O", "24722.75"], ["H", "24805.00"], ["L", "24626.00"], ["C", "24784.75"]];

function RightWindow() {
  return (
    <section aria-label="TopstepX window" className={`mb-[-3px] flex min-w-0 grow basis-[622px] flex-col overflow-hidden border-b-2 border-l-2 border-[#3a3a38] bg-[#1b1b1f] ${LEFT_FONT}`}>
      <div className="flex h-[21px] items-center bg-[#2a2a2a]">
        <Btn label="Tab actions" className="h-4 w-[18px] text-[#ddd]"><PanelLeft size={8} /></Btn>
        <button type="button" className="ml-1 h-[11px] w-[36px] rounded-[3px] bg-[#7da4f5] text-[6px] leading-[11px] text-[#1b2b50]">Dashboard</button>
        <div role="tab" aria-selected="true" className="ml-1 flex h-full w-[122px] items-center bg-[#333] text-[6px] text-[#e8e8e8]">
          <span className="mx-[2px] flex size-[8px] items-center justify-center bg-black text-[7px] font-bold text-white">I</span>
          <span className="ml-[3px] min-w-0 flex-1 overflow-hidden whitespace-nowrap">MNQZ25 $24,783.00 ▼ -1.24%</span>
          <Btn label="Close tab" className="w-[18px]"><X size={8} /></Btn>
        </div>
        <div role="tab" aria-selected="false" className="flex h-full w-[120px] items-center border-r border-[#444] text-[6px] text-[#cfcfcf]">
          <span className="ml-1 w-[10px] text-[7px] font-bold text-[#a8552c]">M</span>
          <span className="min-w-0 flex-1 overflow-hidden whitespace-nowrap">Inbox (35,432) - luinbruis44@gm</span>
          <Btn label="Close tab" className="w-[14px]"><X size={8} /></Btn>
        </div>
        <Btn label="New tab" className="h-4 w-[18px] text-[#ddd]"><Plus size={9} /></Btn>
        <WindowButtons />
      </div>
      <AddressRow id="url-right" url="https://topstepx.com/trade" first={<LayoutGrid size={8} />} />
      <div className="flex flex-1 font-['Roboto','Liberation_Sans',sans-serif]">
        <nav aria-label="Platform" className="flex w-[31px] shrink-0 flex-col items-center bg-[#29292d] text-[#55555a]">
          <div className="flex h-[40px] flex-col items-center pt-[6px] text-center">
            <span className={`text-[6px] leading-[8px] font-black text-white ${NARROW}`}>TOPSTEP</span>
            <span className={`flex h-[20px] w-[20px] items-center justify-center bg-white text-[19px] leading-none font-black text-[#161616] ${NARROW}`}>X</span>
          </div>
          <Btn label="Trade" className="size-[24px] text-white"><Glyph d={P.candles} size={17} /></Btn>
          <Btn label="Accounts" className="size-[24px]"><Users size={17} strokeWidth={1.500} /></Btn>
          <Btn label="Performance" className="size-[24px]"><Glyph d={P.sparkline} size={16} /></Btn>
          <Btn label="Settings" className="size-[24px]"><Settings size={16} strokeWidth={1.500} /></Btn>
          <Btn label="TV live" className="size-[24px]">
            <span className="flex w-[17px] flex-col overflow-hidden rounded-[3px] border border-[#d32a2a] bg-[#b9ee2a] text-center text-[9px] leading-[12px] font-black text-[#111]">
              TV<span className="bg-[#d32a2a] text-[5px] leading-[6px] text-[#5c0d0d]">LIVE</span>
            </span>
          </Btn>
          <Btn label="Support" className="size-[24px]"><span className="flex size-[13px] items-center justify-center rounded-[2px] bg-[#66666b] text-[10px] font-bold text-[#29292d]">?</span></Btn>
          <Btn label="Log out" className="mt-auto h-[20px] w-[24px] text-[#ccc]"><LogIn size={14} strokeWidth={1.500} /></Btn>
        </nav>
        <div className="flex min-w-0 flex-1 flex-col pl-[2px]">
          <div className={`flex h-[23px] items-center gap-[3px] text-[#ddd] ${NARROW}`}>
            <button type="button" className="relative flex h-[18px] w-[99px] items-center rounded-[3px] border border-[#3a4040] pl-[6px] text-[6px] font-bold text-white">
              <span className="text-[#e8c020]">$50K EXPRESS</span>&nbsp;| EU-MINI ON...
              <span aria-hidden="true" className="absolute right-[6px] border-x-2 border-t-2 border-x-transparent border-t-white" />
            </button>
            <Stat t="BAL: ******" /><Stat t="MLL: ******" /><Stat t="RP&L: $0.00" /><Stat t="UP&L: $0.00" />
            <Btn label="Account info" className="size-[15px] bg-[#2b2b30] text-white"><Info size={10} /></Btn>
            <span className="ml-auto text-[5px] whitespace-nowrap text-[#999]">Robust Rate: Medium</span>
            <Wifi size={7} className="text-[#3f8f4a]" />
            <BarChart3 size={7} className="text-[#3f8f4a]" />
            <label htmlFor="layout" className="sr-only">Layout</label>
            <div className="relative flex items-center">
              <select id="layout" className="h-[13px] w-[74px] appearance-none border border-[#ccc] bg-[#17171a] pl-[4px] text-[6px] text-white"><option>LAYOUT | default (draft)</option></select>
              <ChevronDown size={6} strokeWidth={3} className="pointer-events-none absolute right-[2px]" />
            </div>
            <Btn label="Save layout" className="w-[10px]"><Save size={7} /></Btn>
            <Btn label="Add" className="w-[10px]"><Plus size={7} /></Btn>
            <Btn label="Reset" className="w-[10px]"><RotateCcw size={7} /></Btn>
            <Btn label="Duplicate" className="w-[10px]"><Copy size={7} /></Btn>
            <Btn label="Expand" className="w-[8px]"><Maximize size={7} /></Btn>
          </div>
          <div className="flex flex-1">
            <div className="flex min-w-0 flex-1 flex-col bg-[#29292d]">
              <div className="flex h-[15px] items-center border-b border-[#38383d] pr-1 pl-1">
                <h2 className={`flex h-[15px] w-[25px] items-center border-b border-white pl-[2px] text-[7px] font-bold text-white ${NARROW}`}>Chart</h2>
                <PlusBox />
                <Btn label="Maximize panel" className="ml-1 size-[7px] border border-[#444]" />
              </div>
              <div className="flex h-[20px] items-center pl-[5px] text-[7px] font-medium text-[#d6d6d8]">
                <button type="button" className="flex w-[46px] items-center gap-px text-left"><Search size={8} />/MNQ</button>
                <Btn label="Compare" className="w-[23px]"><CirclePlus size={10} strokeWidth={1.700} /></Btn>
                <Bar className="h-[11px] bg-[#aaa]" />
                <Btn label="5 minutes" className="w-[16px]">5m</Btn>
                <Btn label="15 minutes" className="w-[19px] text-[#c07c28]">15m</Btn>
                <Btn label="30 minutes" className="w-[19px]">30m</Btn>
                <Btn label="1 hour" className="w-[14px]">1h</Btn>
                <Btn label="4 hours" className="w-[13px]">4h</Btn>
                <Btn label="More intervals" className="w-[10px]"><ChevronDown size={7} /></Btn>
                <Bar className="h-[11px] bg-[#aaa]" />
                <Btn label="Bars" className="w-[15px]"><Glyph d={P.bars} size={10} /></Btn>
                <Btn label="Candles" className="w-[15px] text-[#c07c28]"><Glyph d={P.candle} size={10} /></Btn>
                <Btn label="Chart types" className="w-[12px]"><ChevronDown size={7} /></Btn>
                <Bar className="h-[11px] bg-[#aaa]" />
                <Btn label="Indicators" className="w-[16px]"><Glyph d={P.fx} size={10} /></Btn>
                <Btn label="Templates" className="w-[20px]"><LayoutGrid size={9} /></Btn>
                <Bar className="h-[11px] bg-[#aaa]" />
                <button type="button" className="flex w-[48px] items-center justify-center gap-px"><Settings size={7} />Preferences</button>
                <Bar className="h-[11px] bg-[#aaa]" />
                <button type="button" className="flex w-[60px] items-center justify-center gap-[2px] whitespace-nowrap"><Link2 size={8} className="-rotate-45" />Add Chart Link</button>
                <Bar className="h-[11px] bg-[#aaa]" />
                <Btn label="Undo" className="w-[18px]"><Undo2 size={8} /></Btn>
                <Btn label="Redo" className="w-[20px] text-[#555]"><Redo2 size={8} /></Btn>
                <div className="ml-auto flex items-center pr-1">
                  <Btn label="Layout" className="w-[22px]"><Square size={10} strokeWidth={1.700} /></Btn>
                  <button type="button" className="flex w-[30px] flex-col items-center leading-[7px]">default<span className="text-[5px] leading-[4px] text-[#c07c28]">Save</span></button>
                  <Btn label="Layouts" className="w-[12px]"><ChevronDown size={7} /></Btn>
                  <Bar className="h-[11px] bg-[#aaa]" />
                </div>
              </div>
              <div className="flex flex-1">
                <RightDrawRail />
                <div className="flex min-w-0 flex-1 flex-col">
                  <div className="relative flex">
                    <RightPlot />
                    <RightAxis />
                    <div className="absolute top-[4px] left-[3px] flex items-center gap-[3px] text-[7px] whitespace-nowrap text-[#2ea6a6]">
                      <span className="mr-[6px] flex h-[12px] w-[62px] items-center justify-center rounded-[2px] border border-[#2a2f72] bg-[#15151c] text-[#ddd]">MNQZ25 · 15 •••</span>
                      {OHLC.map(([k, v]) => <span key={k}><span className="text-[#c8c8cc]">{k}</span>{v}</span>)}
                      <span>+61.50 (+0.25%)</span>
                    </div>
                    <span className="absolute top-[5px] right-[42px] rounded-[2px] bg-[#1b1b1e] px-1 text-center text-[5px] leading-[8px] font-bold text-white">Position Bracket<br />Enabled</span>
                    <div className="absolute top-[331px] left-[151px] flex h-[19px] items-center rounded-[3px] bg-[#26262a] pl-[12px] text-[#c4c4c8] shadow-md shadow-black/40">
                      {RIGHT_TOOLS.map(([n, d]) => (
                        <Btn key={n} label={n} className="h-[18px] w-[19px]"><Glyph d={d} size={13} /></Btn>
                      ))}
                    </div>
                  </div>
                  <div className="flex h-[20px] items-center pl-[5px] text-[7px] font-medium text-[#c8c8cc]">
                    <Btn label="1 year range" className="w-[16px]">1yr</Btn>
                    <Btn label="3 months range" className="w-[16px]">3m</Btn>
                    <Btn label="1 month range" className="w-[15px]">1m</Btn>
                    <Btn label="5 days range" className="w-[14px]">5d</Btn>
                    <Btn label="3 days range" className="w-[14px]">3d</Btn>
                    <Btn label="1 day range" className="w-[13px]">1d</Btn>
                    <Bar className="h-[11px] bg-[#aaa]" />
                    <Btn label="Go to date" className="w-[16px]"><Calendar1 size={11} strokeWidth={1.700} /></Btn>
                    <div className="ml-auto flex items-center pr-[5px]">
                      <button type="button" className="w-[58px]">09:38:32 (UTC-5)</button>
                      <button type="button" className="w-[18px]">ETH</button>
                      <Bar className="h-[11px] bg-[#aaa]" />
                      <Btn label="Percent scale" className="w-[12px]">%</Btn>
                      <Btn label="Log scale" className="w-[16px]">log</Btn>
                      <Btn label="Auto scale" className="w-[19px] text-white">auto</Btn>
                    </div>
                  </div>
                </div>
              </div>
            </div>
            <OrderColumn />
          </div>
          <div className={`mt-[3px] bg-[#29292d] text-[#55555a] ${NARROW}`}>
            <div role="tablist" className="flex h-[15px] items-center pr-[9px] pl-[6px] text-[7px]">
              <button role="tab" aria-selected="false" type="button" className="w-[40px] text-left">Accounts ×</button>
              <button role="tab" aria-selected="true" type="button" className="h-full w-[35px] border-b border-white text-left font-bold text-white">Positions</button>
              <button role="tab" aria-selected="false" type="button" className="ml-1 w-[32px] text-left">Orders ×</button>
              <button role="tab" aria-selected="false" type="button" className="w-[32px] text-left">Trades ×</button>
              <button role="tab" aria-selected="false" type="button" className="w-[34px] text-left">Quotes ×</button>
              <button role="tab" aria-selected="false" type="button" className="w-[34px] text-left whitespace-nowrap">The Tilt™ ×</button>
              <PlusBox />
            </div>
            <table className="h-[13px] w-full table-fixed border-y border-[#3e3e43] text-left text-[6px] leading-[10px] text-white">
              <thead>
                <tr>
                  <th className="w-[92px] pl-[6px]">Time</th><th className="w-[68px]">Symbol</th><th className="w-[46px]">Position</th><th className="w-[86px]">Entry Price</th>
                  <th className="w-[88px]">Risk</th><th className="w-[78px]">To Make</th><th className="w-[84px]">P&amp;L</th><th>Close</th>
                </tr>
              </thead>
            </table>
          </div>
          <footer className={`grid h-[10px] grid-cols-[1fr_auto_1fr] items-center bg-[#1f1f22] text-[5px] text-[#999] ${NARROW}`}>
            <span>Version: 1.22.34</span><span>Licensed to Topstep &amp; powered by ProjectX. Copyright 2024-2025</span><span />
          </footer>
        </div>
      </div>
    </section>
  );
}

/* ---------- taskbar ---------- */

function Taskbar() {
  return (
    <footer className={`flex h-[20px] items-center bg-[#0e0e0e] text-white ${LEFT_FONT}`}>
      <Btn label="Start" className="w-[24px]">
        <svg width="8" height="8" viewBox="0 0 8 8" fill="#fff" aria-hidden="true"><path d="M0 1l3.500-.5v3.200H0zM4 .4L8 0v3.700H4zM0 4.200h3.500v3.300L0 7zM4 4.200h4V8l-4-.5z" /></svg>
      </Btn>
      <div className="flex h-full w-[146px] items-center bg-[#363636] px-[6px]">
        <Search size={9} className="shrink-0 -scale-x-100" />
        <label htmlFor="search" className="sr-only">Search</label>
        <input id="search" placeholder="Type here to search" className="ml-[5px] min-w-0 flex-1 bg-transparent text-[7px] outline-none placeholder:text-[#d0d0d0]" />
        <svg width="32" height="16" viewBox="0 0 32 16" aria-hidden="true">
          <path d="M13 1l2 5 5 2-5 2-2 5-2-5-5-2 5-2z" fill="#f7c52f" />
          <path d="M24 7l1 2 2 1-2 1-1 2-1-2-2-1 2-1z" fill="#e9a53a" />
          <circle cx="3" cy="13" r="2" fill="#3d8fe0" /><circle cx="21" cy="4" r="1" fill="#b98b5c" /><circle cx="30" cy="14" r="1" fill="#e9a53a" />
        </svg>
      </div>
      <Btn label="Task view" className="h-full w-[25px]"><SlidersHorizontal size={9} /></Btn>
      <Btn label="Copilot" className="h-full w-[25px] rounded-none bg-[#a9561d]"><Copilot size={12} /></Btn>
      <Btn label="Edge" className="h-full w-[24px] rounded-none border-b-2 border-[#8fd0f0] bg-[#2c3336]">
        <svg width="14" height="14" viewBox="0 0 16 16" aria-hidden="true">
          <circle cx="8" cy="8" r="7" fill="#1880c8" /><path d="M1 8C2 0 14-1 15 7c0 3-4 4-5 2 1-4-5-5-9-1z" fill="#46c98a" /><path d="M6 9c0 3 4 5 8 3-4 5-10 2-8-3z" fill="#0d3c66" />
        </svg>
      </Btn>
      <Btn label="File Explorer" className="h-full w-[25px]">
        <svg width="11" height="9" viewBox="0 0 11 9" aria-hidden="true"><path d="M0 0h4l1 1h6v8H0z" fill="#f3c44a" /><path d="M2 4h7v4H2z" fill="#3d8fd8" /></svg>
      </Btn>
      <Btn label="Store" className="h-full w-[25px]">
        <svg width="12" height="12" viewBox="0 0 12 12" aria-hidden="true"><path d="M4 2V1h4v1" fill="none" stroke="#ddd" /><rect x="0" y="2" width="12" height="10" rx="2" fill="#eee" /><path d="M4 5h1.500v1.500H4zM6.500 5H8v1.500H6.500zM4 7.500h1.500V9H4zM6.500 7.500H8V9H6.500z" fill="#333" /></svg>
      </Btn>
      <Btn label="Outlook" className="h-full w-[25px]">
        <svg width="13" height="12" viewBox="0 0 13 12" aria-hidden="true"><path d="M4 2l8-1v10l-9 1z" fill="#38a0e8" /><circle cx="4.500" cy="6.500" r="4" fill="#1060b8" /><circle cx="4.500" cy="6.500" r="1.700" fill="none" stroke="#fff" /></svg>
      </Btn>
      <Btn label="Discord" className="mx-[2px] h-full w-[21px] rounded-none border-b-2 border-[#8fd0f0]">
        <svg width="13" height="13" viewBox="0 0 13 13" aria-hidden="true"><circle cx="6.500" cy="6.500" r="6" fill="#5661e8" /><path d="M3 8c0-4 7-4 7 0-2 1-5 1-7 0z" fill="#fff" /><circle cx="10" cy="10" r="3" fill="#e2433f" /></svg>
      </Btn>
      <Btn label="OBS Studio" className="mx-[2px] h-full w-[21px] rounded-none border-b-2 border-[#8fd0f0]">
        <svg width="13" height="13" viewBox="0 0 13 13" aria-hidden="true"><circle cx="6" cy="6" r="5.300" fill="#222" stroke="#ccc" /><path d="M6 2a3 3 0 0 1 2 5M3 5a3 3 0 0 0 3 4" fill="none" stroke="#ccc" /><circle cx="9" cy="9.500" r="3.200" fill="#dc1f1f" /></svg>
      </Btn>
      <div className="ml-auto flex h-full items-center">
        <button type="button" className="flex items-center gap-1 pr-[8px] text-[7px] whitespace-nowrap">
          <svg width="12" height="12" viewBox="0 0 12 12" aria-hidden="true"><circle cx="6" cy="6" r="5.500" fill="#f09a2c" /><circle cx="9" cy="3" r="3" fill="#c63a1e" /></svg>
          68°F&nbsp; Sunny
        </button>
        <Btn label="Hidden icons" className="w-[12px]"><ChevronUp size={8} /></Btn>
        <Btn label="USB" className="w-[12px]"><Usb size={8} /></Btn>
        <Btn label="Microphone" className="w-[12px]"><Mic size={8} fill="#fff" /></Btn>
        <Btn label="Update" className="w-[12px]"><Save size={8} /></Btn>
        <Btn label="Network" className="w-[12px]"><Wifi size={8} /></Btn>
        <Btn label="Volume" className="w-[12px]"><Volume2 size={8} /></Btn>
        <div className="w-[34px] text-center font-['Roboto','Liberation_Sans',sans-serif] text-[6px] leading-[9px]">9:38 AM<br />11/14/2025</div>
        <Btn label="Notifications" className="w-[12px] justify-end"><MessageSquareText size={9} fill="#fff" className="text-[#ddd]" /></Btn>
      </div>
    </footer>
  );
}

export default function App() {
  return (
    <main className="min-h-screen overflow-hidden bg-black pt-[109px]">
      <div className="relative bg-linear-to-r from-[#5f9090] from-5% via-[#8f8468] via-20% to-[#c08748] to-45%">
        <div className="flex pb-[5px]">
          <div className="w-[4px] shrink-0 bg-[linear-gradient(#8a8496,#7d7480_18%,#1d1610_22%,#2a1d14_43%,#a8958a_46%,#2b3020_54%,#b8bcb0_70%,#5f9090_85%)]" />
          <LeftWindow />
          <RightWindow />
        </div>
        <svg className="absolute top-[56px] left-[144px]" width="8" height="11" viewBox="0 0 8 11" aria-hidden="true">
          <path d="M.5 0v9l2-2 1.500 3.500 1.500-.6L4 6.500h3z" fill="#fff" stroke="#222" strokeWidth=".5" />
        </svg>
      </div>
      <Taskbar />
    </main>
  );
}
